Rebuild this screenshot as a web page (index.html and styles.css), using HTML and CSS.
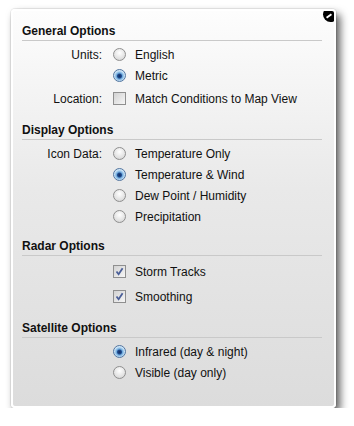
FILE: index.html
```html
<!DOCTYPE html>
<html lang="en">
<head>
    <meta charset="UTF-8">
    <title>Weather Options</title>
    <link rel="stylesheet" href="styles.css">
</head>
<body>
    <div class="panel">
        <span class="close"></span>

        <section class="group">
            <h2 class="group-title">General Options</h2>
            <div class="rows">
                <div class="row">
                    <span class="label">Units:</span>
                    <span class="radio"></span>
                    <span class="text">English</span>
                </div>
                <div class="row">
                    <span class="label"></span>
                    <span class="radio checked"></span>
                    <span class="text">Metric</span>
                </div>
                <div class="row tall">
                    <span class="label">Location:</span>
                    <span class="check"></span>
                    <span class="text">Match Conditions to Map View</span>
                </div>
            </div>
        </section>

        <section class="group">
            <h2 class="group-title">Display Options</h2>
            <div class="rows">
                <div class="row">
                    <span class="label">Icon Data:</span>
                    <span class="radio"></span>
                    <span class="text">Temperature Only</span>
                </div>
                <div class="row">
                    <span class="label"></span>
                    <span class="radio checked"></span>
                    <span class="text">Temperature &amp; Wind</span>
                </div>
                <div class="row">
                    <span class="label"></span>
                    <span class="radio"></span>
                    <span class="text">Dew Point / Humidity</span>
                </div>
                <div class="row">
                    <span class="label"></span>
                    <span class="radio"></span>
                    <span class="text">Precipitation</span>
                </div>
            </div>
        </section>

        <section class="group">
            <h2 class="group-title">Radar Options</h2>
            <div class="rows">
                <div class="row tall">
                    <span class="label"></span>
                    <span class="check">
                        <svg width="11" height="11" viewBox="0 0 11 11"><path d="M2.5 5.5 L4.6 8.2 L8.6 2.2" fill="none" stroke="#4b5f98" stroke-width="1.8"/></svg>
                    </span>
                    <span class="text">Storm Tracks</span>
                </div>
                <div class="row tall">
                    <span class="label"></span>
                    <span class="check">
                        <svg width="11" height="11" viewBox="0 0 11 11"><path d="M2.5 5.5 L4.6 8.2 L8.6 2.2" fill="none" stroke="#4b5f98" stroke-width="1.8"/></svg>
                    </span>
                    <span class="text">Smoothing</span>
                </div>
            </div>
        </section>

        <section class="group">
            <h2 class="group-title">Satellite Options</h2>
            <div class="rows">
                <div class="row">
                    <span class="label"></span>
                    <span class="radio checked"></span>
                    <span class="text">Infrared (day &amp; night)</span>
                </div>
                <div class="row">
                    <span class="label"></span>
                    <span class="radio"></span>
                    <span class="text">Visible (day only)</span>
                </div>
            </div>
        </section>
    </div>
</body>
</html>
```

FILE: styles.css
```css
body {
    margin: 0;
    background-color: #fff;
    font-family: 'Liberation Sans', Arial, sans-serif;
    font-size: 12px;
    color: #111;
}
.panel {
    position: relative;
    overflow: hidden;
    box-sizing: border-box;
    width: 325px;
    height: 399px;
    margin: 9px 0 0 11px;
    padding: 13px 12px 0 10px;
    border: 2px solid #fff;
    border-radius: 4px;
    background: linear-gradient(#fdfdfd, #e9e9e9 45%, #dcdcdc);
    box-shadow: 0 0 0 1px rgba(0, 0, 0, 0.07), 4px 5px 8px rgba(0, 0, 0, 0.65);
}
.close {
    position: absolute;
    top: -4px;
    right: -4px;
    width: 15px;
    height: 15px;
    border-radius: 50%;
    background-color: #000;
}
.close::after {
    content: "";
    position: absolute;
    left: 3px;
    top: 8px;
    width: 6px;
    height: 2px;
    background-color: #fff;
    transform: rotate(-35deg);
}
.group {
    margin-left: -1px;
}
.group + .group {
    margin-top: 12px;
}
.group-title {
    margin: 0;
    font-size: 12px;
    font-weight: bold;
    line-height: 14px;
    padding-bottom: 2px;
    border-bottom: 1px solid #c9c9c9;
    color: #111;
}
.rows {
    padding-top: 3px;
}
.row {
    display: flex;
    align-items: center;
    height: 21px;
}
.row.tall {
    height: 25px;
}
.label {
    width: 80px;
    margin-right: 11px;
    text-align: right;
}
.text {
    margin-left: 9px;
    white-space: nowrap;
}
.radio {
    box-sizing: border-box;
    width: 13px;
    height: 13px;
    border-radius: 50%;
    border: 1px solid #8f8f8f;
    background: radial-gradient(circle at 50% 35%, #ffffff, #dedede 70%, #c8c8c8);
}
.radio.checked {
    border-color: #52759f;
    background: radial-gradient(circle at 50% 55%, #102a5e 0, #1f4b8e 2px, #6ea9dc 3px, #c4e0f5 5px, #eaf4fc 7px);
}
.check {
    box-sizing: border-box;
    display: flex;
    align-items: center;
    justify-content: center;
    width: 13px;
    height: 13px;
    border: 1px solid #8f8f8f;
    background: linear-gradient(135deg, #d2d2d2, #f6f6f6);
}
```
